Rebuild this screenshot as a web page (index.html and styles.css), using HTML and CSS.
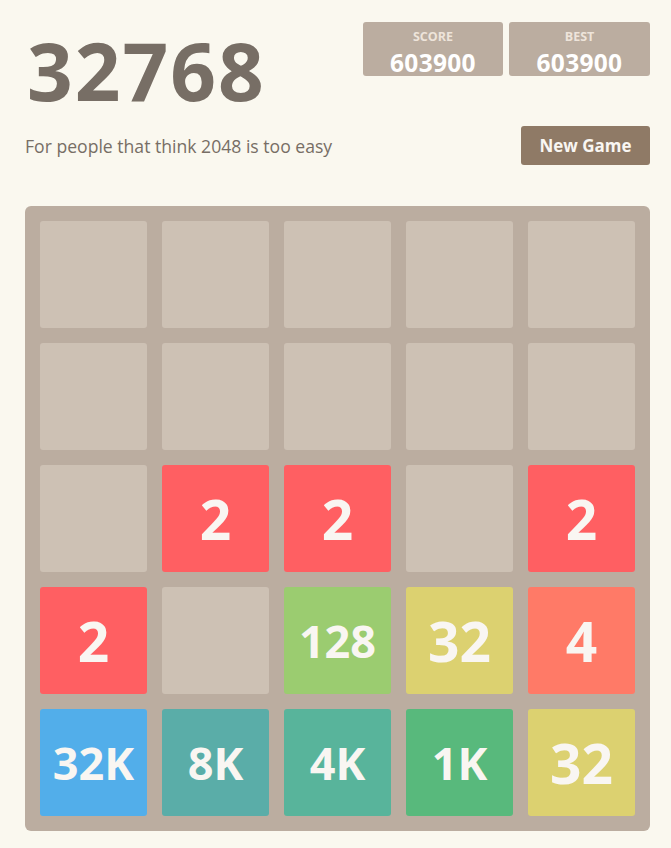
FILE: index.html
```html
<!DOCTYPE html>
<html>
<head>
<meta charset="utf-8">
<link rel="stylesheet" href="styles.css">
</head>
<body>
<div class="container">
  <div class="heading">
    <h1 class="title">32768</h1>
    <div class="scores">
      <div class="score-box"><div class="score-label">SCORE</div><div class="score-value">603900</div></div>
      <div class="score-box best"><div class="score-label">BEST</div><div class="score-value">603900</div></div>
    </div>
  </div>
  <div class="intro">
    <p class="intro-text">For people that think 2048 is too easy</p>
    <a class="new-game">New Game</a>
  </div>
  <div class="board">
    <div class="cell"></div><div class="cell"></div><div class="cell"></div><div class="cell"></div><div class="cell"></div>
    <div class="cell"></div><div class="cell"></div><div class="cell"></div><div class="cell"></div><div class="cell"></div>
    <div class="cell"></div><div class="cell t2">2</div><div class="cell t2">2</div><div class="cell"></div><div class="cell t2">2</div>
    <div class="cell t2">2</div><div class="cell"></div><div class="cell t128 small">128</div><div class="cell t32">32</div><div class="cell t4">4</div>
    <div class="cell t32k small">32K</div><div class="cell t8k small">8K</div><div class="cell t4k small">4K</div><div class="cell t1k small">1K</div><div class="cell t32">32</div>
  </div>
</div>
</body>
</html>
```
FILE: styles.css
```css
html, body {
  margin: 0;
  padding: 0;
  background: #faf8ef;
}
body {
  font-family: "Open Sans", "DejaVu Sans", sans-serif;
  color: #776e65;
}
.container {
  width: 625px;
  margin-left: 25px;
}
.heading {
  display: flex;
  justify-content: space-between;
  align-items: flex-start;
  padding-top: 22px;
}
.title {
  margin: 8px 0 0 2px;
  font-size: 80px;
  line-height: 80px;
  letter-spacing: 2px;
  font-weight: 700;
  color: #776e65;
  height: 80px;
}
.scores {
  display: flex;
  gap: 6px;
}
.score-box {
  width: 140px;
  height: 54px;
  background: #bbada0;
  border-radius: 3px;
  box-sizing: border-box;
  padding-top: 8px;
  text-align: center;
  overflow: visible;
}
.score-box.best {
  width: 141px;
}
.score-label {
  font-size: 12.5px;
  line-height: 14px;
  font-weight: 700;
  color: #eee4da;
}
.score-value {
  margin-top: 2px;
  font-size: 24.5px;
  line-height: 33px;
  letter-spacing: 0.3px;
  font-weight: 700;
  color: #ffffff;
}
.intro {
  display: flex;
  justify-content: space-between;
  align-items: center;
  margin-top: 16px;
}
.intro-text {
  margin: 0;
  font-size: 17.6px;
  line-height: 20px;
}
.new-game {
  width: 129px;
  height: 39px;
  background: #8f7a66;
  border-radius: 3px;
  color: #f9f6f2;
  font-weight: 700;
  font-size: 17px;
  line-height: 39px;
  text-align: center;
}
.board {
  margin-top: 41px;
  width: 625px;
  height: 625px;
  box-sizing: border-box;
  padding: 15px;
  background: #bbada0;
  border-radius: 6px;
  display: grid;
  grid-template-columns: repeat(5, 107px);
  grid-template-rows: repeat(5, 107px);
  gap: 15px;
}
.cell {
  background: #cdc1b4;
  border-radius: 3px;
  color: #f9f6f2;
  font-weight: 700;
  font-size: 55px;
  line-height: 107px;
  text-align: center;
}
.cell.small {
  font-size: 45px;
}
.t2 { background: #ff5f62; }
.t4 { background: #ff7a67; }
.t32 { background: #dcd170; }
.t128 { background: #9bcc70; }
.t1k { background: #58b97c; }
.t4k { background: #58b49b; }
.t8k { background: #5aada8; }
.t32k { background: #52aeea; }
```
